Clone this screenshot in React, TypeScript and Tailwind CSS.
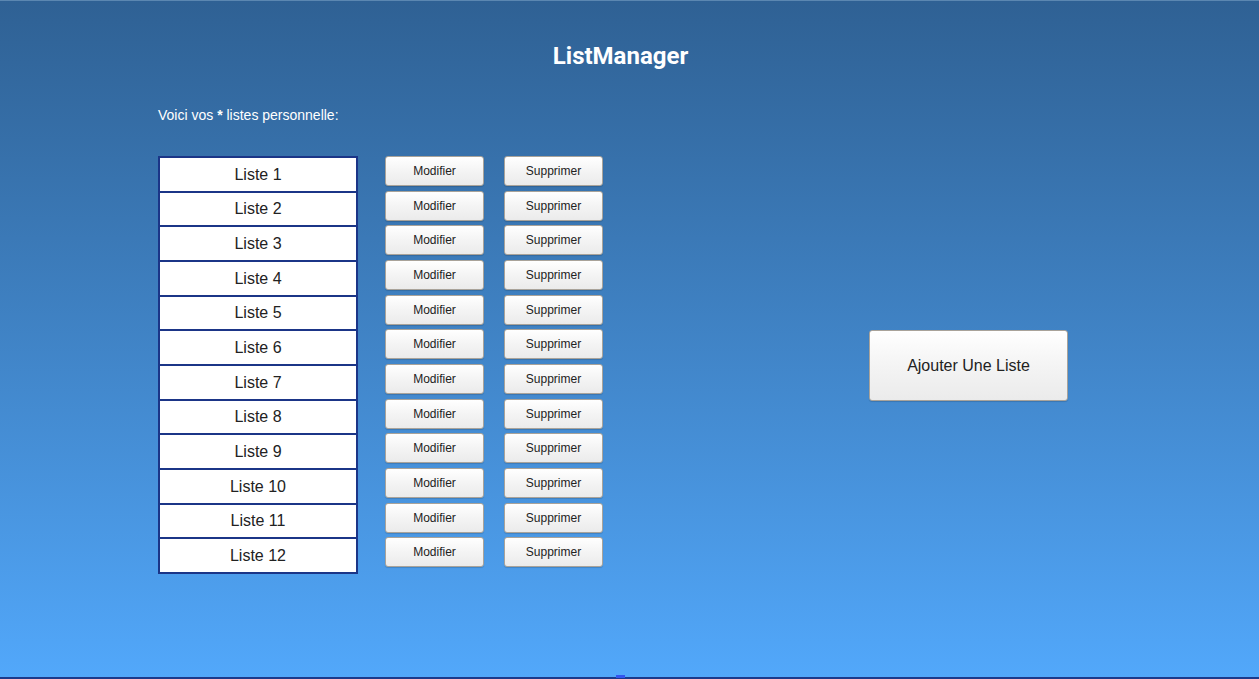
import React from 'react'

const lists = Array.from({ length: 12 }, (_, i) => `Liste ${i + 1}`)

const btn =
  "rounded-[3px] border border-[#a9a39a] bg-linear-to-b from-[#ffffff] via-[#f4f4f4] to-[#ebebeb] text-[#222] font-['Liberation_Sans',Arial,sans-serif] shadow-[0_1px_1px_rgba(0,0,0,0.15)]"

const App: React.FC = () => {
  return (
    <div className="flex h-[679px] w-full flex-col overflow-hidden border-t border-[#5b87b1] bg-linear-to-b from-[#2f6194] to-[#52a8fb]">
      <div className="w-[1241px] flex-1">
        <h1 className="pt-[41px] text-center font-['Roboto',sans-serif] text-[24px] font-bold leading-[28px] text-white">
          ListManager
        </h1>
        <p className="mt-[37px] pl-[158px] font-['Liberation_Sans',Arial,sans-serif] text-[14px] leading-[17px] text-white">
          Voici vos <b>*</b> listes personnelle:
        </p>
        <div className="mt-[32px] flex items-center pl-[158px]">
          <div className="flex flex-col">
            {lists.map((name, i) => (
              <div key={name} className="flex items-start">
                <div
                  className={
                    "flex w-[200px] items-center justify-center border-x-2 border-t-2 border-[#1b3587] bg-white pt-[1px] font-['Liberation_Sans',Arial,sans-serif] text-[16px] text-[#222] " +
                    (i === lists.length - 1 ? "h-[36.67px] border-b-2" : "h-[34.67px]")
                  }
                >
                  {name}
                </div>
                <button className={btn + " ml-[27px] h-[30px] w-[99px] text-[12px]"}>Modifier</button>
                <button className={btn + " ml-[20px] h-[30px] w-[99px] text-[12px]"}>Supprimer</button>
              </div>
            ))}
          </div>
          <button className={btn + " ml-[266px] mt-[2px] h-[71px] w-[199px] text-[16px]"}>Ajouter Une Liste</button>
        </div>
      </div>
      <div className="relative h-[2px] w-full bg-[#1b3a8c]">
        <div className="absolute bottom-[1px] left-[616px] h-[3px] w-[9px] bg-[#3355ee]" />
      </div>
    </div>
  )
}

export default App
